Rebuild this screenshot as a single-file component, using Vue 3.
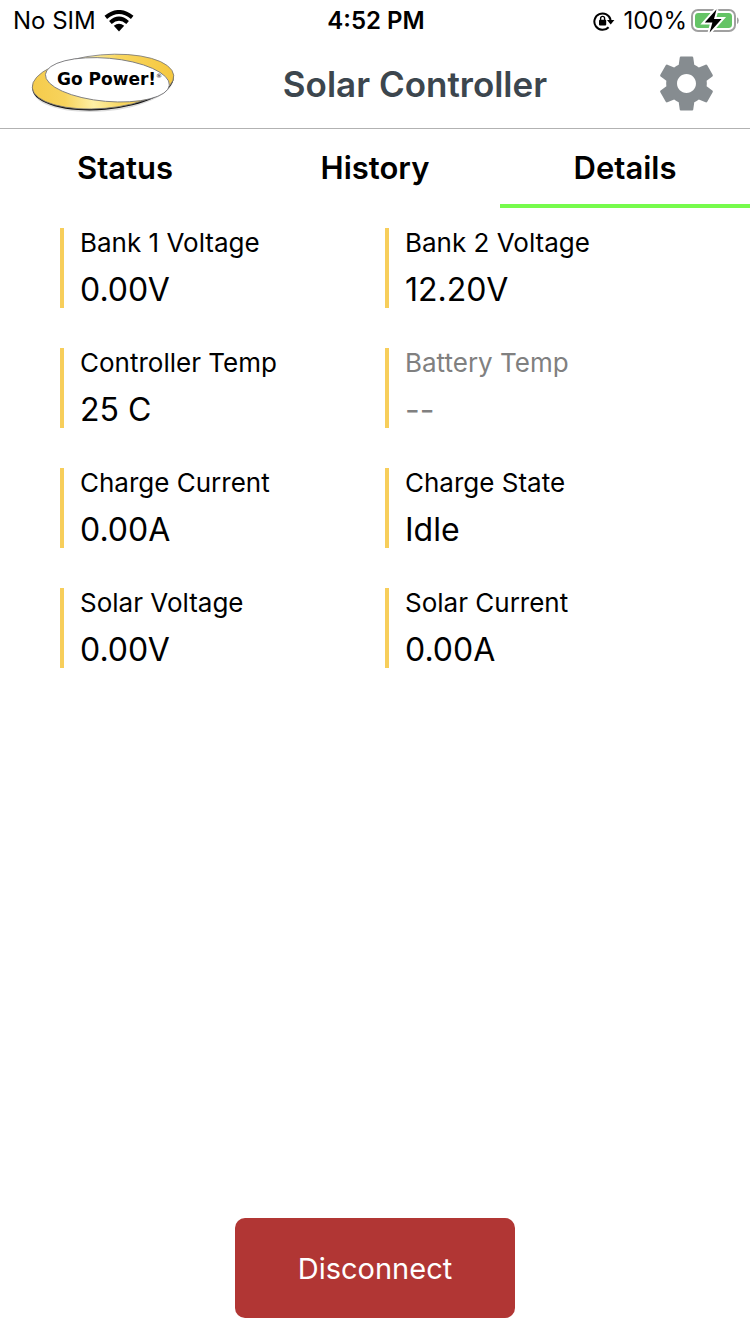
<script setup>
import { ref } from 'vue'

const tabs = ['Status', 'History', 'Details']
const activeTab = ref('Details')

const readings = [
  { label: 'Bank 1 Voltage', value: '0.00V' },
  { label: 'Bank 2 Voltage', value: '12.20V' },
  { label: 'Controller Temp', value: '25 C' },
  { label: 'Battery Temp', value: '--', muted: true },
  { label: 'Charge Current', value: '0.00A' },
  { label: 'Charge State', value: 'Idle' },
  { label: 'Solar Voltage', value: '0.00V' },
  { label: 'Solar Current', value: '0.00A' },
]
</script>

<template>
  <div class="screen">
    <div class="status-bar">
      <div class="status-side">
        <span>No SIM</span>
        <svg class="wifi" width="30" height="22" viewBox="0 0 30 22" aria-hidden="true">
          <path d="M1.8 7.4Q15-3.4 28.2 7.4" />
          <path d="M6.4 12.4Q15 5 23.6 12.4" />
          <path class="solid" d="M9.8 15.8Q15 11.8 20.2 15.8L15 21.4Z" />
        </svg>
      </div>
      <strong class="clock">4:52 PM</strong>
      <div class="status-side end">
        <svg class="lock" width="22" height="20" viewBox="0 0 22 20" aria-hidden="true">
          <path class="ring" d="M15.6 16.2A8.2 8.2 0 1 1 17.6 9" />
          <path d="M14 9h7.4l-3.7 4.6z" />
          <rect x="6" y="8.8" width="7.2" height="5.6" rx="1" />
          <path class="shackle" d="M7.6 9V7.4a2 2 0 0 1 4 0V9" />
        </svg>
        <span>100%</span>
        <svg class="battery" width="48" height="26" viewBox="0 0 48 26" aria-hidden="true">
          <rect class="case" x="1" y="2" width="43" height="21" rx="6" />
          <rect class="charge" x="4" y="5" width="37" height="15" rx="3.4" />
          <path class="cap" d="M46 9.2q1.8 1 1.8 3.4t-1.8 3.4z" />
          <path class="bolt" d="M25.6 1.2 13.8 14.6h7.6L18.6 24.4 30.6 11h-7.6z" />
        </svg>
      </div>
    </div>

    <header class="header">
      <svg class="logo" width="146" height="62" viewBox="0 0 146 62" role="img" aria-label="Go Power!">
        <defs>
          <linearGradient id="gold" x1="0" x2="1">
            <stop offset="0" stop-color="#f5cb4b" />
            <stop offset=".22" stop-color="#f7d35c" />
            <stop offset=".42" stop-color="#fdf0a6" />
            <stop offset=".62" stop-color="#f8d65f" />
            <stop offset="1" stop-color="#f5c83f" />
          </linearGradient>
        </defs>
        <ellipse cx="73" cy="31.4" rx="70.6" ry="27" transform="rotate(-5 73 31.4)" fill="#dcdcdc" />
        <ellipse cx="73" cy="29.8" rx="71" ry="27" transform="rotate(-5 73 29.8)" fill="#111" />
        <ellipse cx="73" cy="28.6" rx="71" ry="26.8" transform="rotate(-5 73 28.6)" fill="url(#gold)" stroke="#77777a" stroke-width=".8" />
        <ellipse cx="77.4" cy="26.8" rx="62.2" ry="21.6" transform="rotate(5 77.4 26.8)" fill="#fff" stroke="#77777a" stroke-width=".9" />
        <text class="brand" x="27" y="32">Go Power!</text>
        <text class="registered" x="126" y="25">®</text>
      </svg>
      <h1>Solar Controller</h1>
      <button class="settings" type="button" aria-label="Settings">
        <svg width="65" height="65" viewBox="0 0 24 24" aria-hidden="true">
          <path d="M19.43 12.98c.04-.32.07-.64.07-.98s-.03-.66-.07-.98l2.11-1.65c.19-.15.24-.42.12-.64l-2-3.46c-.12-.22-.39-.3-.61-.22l-2.49 1c-.52-.4-1.08-.73-1.69-.98l-.38-2.65C14.46 2.18 14.25 2 14 2h-4c-.25 0-.46.18-.49.42l-.38 2.65c-.61.25-1.17.59-1.69.98l-2.49-1c-.23-.09-.49 0-.61.22l-2 3.46c-.13.22-.07.49.12.64l2.11 1.65c-.04.32-.07.65-.07.98s.03.66.07.98l-2.11 1.65c-.19.15-.24.42-.12.64l2 3.46c.12.22.39.3.61.22l2.49-1c.52.4 1.08.73 1.69.98l.38 2.65c.03.24.24.42.49.42h4c.25 0 .46-.18.49-.42l.38-2.65c.61-.25 1.17-.59 1.69-.98l2.49 1c.23.09.49 0 .61-.22l2-3.46c.12-.22.07-.49-.12-.64l-2.11-1.65zM12 15.5c-1.93 0-3.5-1.57-3.5-3.5s1.57-3.5 3.5-3.5 3.5 1.57 3.5 3.5-1.57 3.5-3.5 3.5z" />
        </svg>
      </button>
    </header>

    <nav class="tabs">
      <button
        v-for="tab in tabs"
        :key="tab"
        type="button"
        :class="{ active: tab === activeTab }"
        :aria-pressed="tab === activeTab"
        @click="activeTab = tab"
      >{{ tab }}</button>
    </nav>

    <main>
      <dl class="readings">
        <div v-for="item in readings" :key="item.label" class="reading" :class="{ muted: item.muted }">
          <dt>{{ item.label }}</dt>
          <dd>{{ item.value }}</dd>
        </div>
      </dl>
    </main>

    <footer>
      <button class="disconnect" type="button">Disconnect</button>
    </footer>
  </div>
</template>

<style>
body {
  margin: 0;
  background: #fff;
}
</style>

<style scoped>
.screen {
  display: flex;
  flex-direction: column;
  min-height: 100vh;
  color: #000;
  font-family: Inter, "Liberation Sans", sans-serif;
}

button {
  margin: 0;
  padding: 0;
  border: 0;
  background: none;
  color: inherit;
  font: inherit;
  cursor: pointer;
}

svg {
  display: block;
  flex: none;
}

.status-bar {
  display: grid;
  grid-template-columns: 1fr auto 1fr;
  align-items: center;
  height: 40px;
  padding: 0 11px 0 13px;
  font-size: 24px;
  line-height: 42px;
}

.status-side {
  display: flex;
  align-items: center;
  gap: 8px;
}

.end {
  justify-content: flex-end;
  gap: 4px;
}

.clock {
  font-weight: 600;
}

.wifi path {
  fill: none;
  stroke: #000;
  stroke-width: 4;
}

.wifi .solid {
  fill: #000;
  stroke: none;
}

.lock {
  margin-right: 4px;
}

.lock .ring,
.lock .shackle {
  fill: none;
  stroke: #000;
  stroke-width: 2;
}

.lock .shackle {
  stroke-width: 1.4;
}

.case {
  fill: #fff;
  stroke: #a0a0a0;
  stroke-width: 2;
}

.charge {
  fill: #65c466;
}

.cap {
  fill: #a0a0a0;
}

.bolt {
  fill: #000;
  stroke: #fff;
  stroke-width: 4;
  paint-order: stroke;
}

.header {
  display: flex;
  align-items: center;
  justify-content: space-between;
  height: 88px;
  padding: 0 31px 0 30px;
  border-bottom: 1px solid #b2b2b2;
}

.brand {
  font: bold 17px "DejaVu Sans", sans-serif;
}

.registered {
  font: 6px "DejaVu Sans", sans-serif;
}

h1 {
  margin: 0;
  color: #3c464e;
  font-size: 35px;
  font-weight: 600;
  line-height: 44px;
}

.settings {
  padding-bottom: 2px;
}

.settings svg {
  fill: #868c90;
}

.tabs {
  display: grid;
  grid-template-columns: repeat(3, 1fr);
}

.tabs button {
  height: 79px;
  padding-top: 2px;
  border-bottom: 4px solid transparent;
  font-size: 31px;
  font-weight: 600;
  line-height: 40px;
}

.tabs .active {
  border-bottom-color: #76fb4c;
}

main {
  flex: 1;
}

.readings {
  display: grid;
  grid-template-columns: 1fr 1fr;
  row-gap: 40px;
  margin: 0;
  padding: 20px 40px 20px 60px;
}

.reading {
  padding-left: 16px;
  border-left: 4px solid #f7ce5b;
}

.muted {
  color: #808080;
}

dt {
  font-size: 26px;
  line-height: 30px;
}

dd {
  margin: 0;
  padding-top: 14px;
  font-size: 32px;
  line-height: 36px;
}

footer {
  display: flex;
  justify-content: center;
  padding-bottom: 16px;
}

.disconnect {
  width: 280px;
  height: 100px;
  border-radius: 10px;
  background: #b13634;
  color: #fff;
  font-size: 29px;
}
</style>
